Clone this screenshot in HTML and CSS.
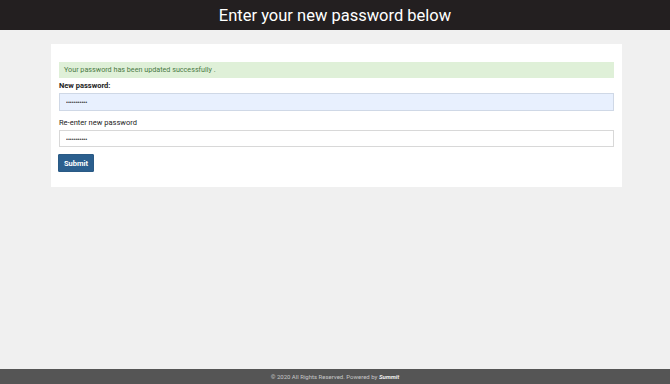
FILE: index.html
```html
<!DOCTYPE html>
<html lang="en">
<head>
<meta charset="utf-8">
<title>Reset password</title>
<link rel="stylesheet" href="styles.css">
</head>
<body>
<header class="topbar">
  <h1 class="title">Enter your new password below</h1>
</header>
<main class="page">
  <section class="card">
    <div class="alert">Your password has been updated successfully .</div>
    <form class="form">
      <label class="label label-bold" for="pw1">New password:</label>
      <input class="field field-filled" id="pw1" type="password" value="xxxxxxxxxxx">
      <label class="label" for="pw2">Re-enter new password</label>
      <input class="field field-last" id="pw2" type="password" value="xxxxxxxxxxx">
      <div class="actions"><button class="btn" type="button">Submit</button></div>
    </form>
  </section>
</main>
<footer class="footer">© 2020 All Rights Reserved. Powered by <b class="brand">Summit</b></footer>
</body>
</html>
```

FILE: styles.css
```css
html, body {
  margin: 0;
  padding: 0;
  height: 100%;
}
body {
  display: flex;
  flex-direction: column;
  background: #f0f0f0;
  font-family: Roboto, "Open Sans", sans-serif;
  color: #222;
}
.topbar {
  height: 30px;
  background: #231f20;
  display: flex;
  align-items: center;
  justify-content: center;
}
.title {
  margin: 0;
  color: #fff;
  font-weight: 400;
  font-size: 16.5px;
}
.page {
  flex: 1;
  padding: 14px 48px 0 51px;
}
.card {
  background: #fff;
  padding: 18px 8px 15px 8px;
}
.alert {
  background: #dff0d8;
  color: #4a7a44;
  font-size: 7.2px;
  height: 16px;
  line-height: 16px;
  padding: 0 5px;
}
.form {
  display: flex;
  flex-direction: column;
}
.label {
  font-size: 7.5px;
  line-height: 10px;
  margin: 0 0 2px;
  color: #222;
}
.label-bold {
  font-weight: 700;
  margin-top: 3px;
}
.field {
  box-sizing: border-box;
  height: 17px;
  border: 1px solid #d8d8d8;
  background: #fff;
  padding: 0 6px;
  font-size: 5.5px;
  color: #444;
  margin: 0 0 7px 0;
  outline: none;
}
.field-filled {
  height: 18px;
  background: #e8f0fe;
  border-color: #cfd8e6;
}
.field-last { margin-bottom: 7px; }
.actions { display: flex; }
.btn {
  background: #2b5f8e;
  color: #fff;
  border: 1px solid #2a5a85;
  font-family: inherit;
  font-weight: 700;
  font-size: 7.5px;
  height: 18px;
  width: 36px;
  padding: 0;
  margin-left: -1px;
  border-radius: 1px;
}
.footer {
  height: 15px;
  line-height: 15px;
  background: #555;
  color: #c8c8c8;
  text-align: center;
  font-size: 6px;
}
.brand {
  font-style: italic;
  color: #eee;
}
```
